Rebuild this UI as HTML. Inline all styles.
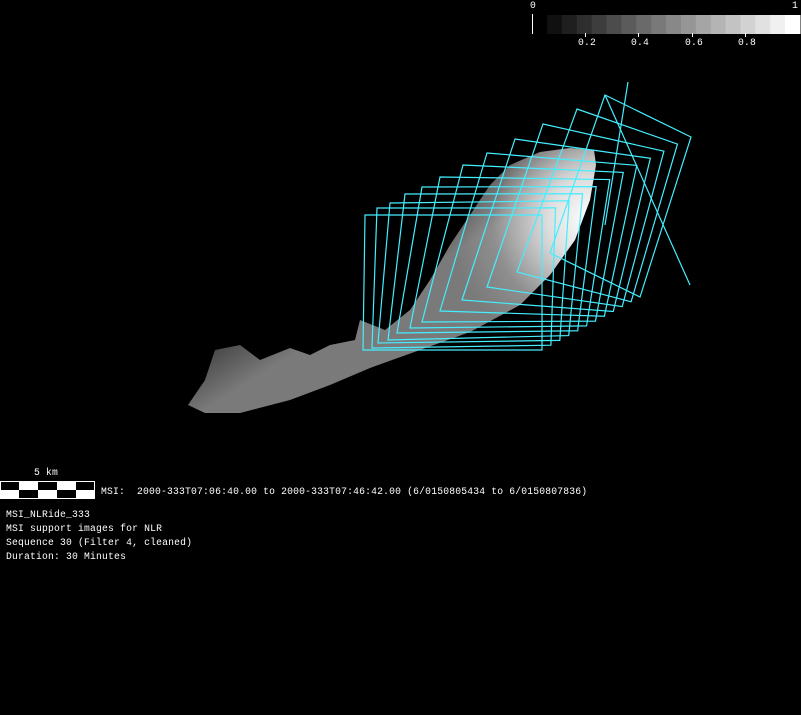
<!DOCTYPE html>
<html><head><meta charset="utf-8"><style>
html,body{margin:0;padding:0;background:#000;width:801px;height:715px;overflow:hidden}
.t{position:absolute;color:#fff;font-family:"Liberation Mono",monospace;font-size:9.7px;letter-spacing:0.19px;line-height:14px;white-space:pre}
</style></head><body>
<svg width="801" height="715" style="position:absolute;left:0;top:0">
<defs>
<linearGradient id="b" x1="395" y1="290" x2="335" y2="195" gradientUnits="userSpaceOnUse">
<stop offset="0" stop-color="#7a7a7a"/>
<stop offset="0.4" stop-color="#4a4a4a"/>
<stop offset="1" stop-color="#1e1e1e"/>
</linearGradient>
<radialGradient id="w" cx="590" cy="220" r="140" gradientUnits="userSpaceOnUse">
<stop offset="0" stop-color="#fff" stop-opacity="1"/>
<stop offset="0.3" stop-color="#fff" stop-opacity="0.75"/>
<stop offset="0.7" stop-color="#fff" stop-opacity="0.15"/>
<stop offset="1" stop-color="#fff" stop-opacity="0"/>
</radialGradient>
</defs>
<g id="ast">
<polygon fill="url(#b)" points="188,405 205,413 240,413 290,400 330,385 370,368 420,350 470,332 520,305 550,275 575,240 590,200 596,165 594,150 570,148 540,152 510,165 490,185 470,215 450,245 430,280 410,310 385,330 360,320 355,340 330,345 310,355 290,348 260,360 240,345 215,350 205,380"/>
<polygon fill="url(#w)" points="188,405 205,413 240,413 290,400 330,385 370,368 420,350 470,332 520,305 550,275 575,240 590,200 596,165 594,150 570,148 540,152 510,165 490,185 470,215 450,245 430,280 410,310 385,330 360,320 355,340 330,345 310,355 290,348 260,360 240,345 215,350 205,380"/>
</g>
<g fill="none" stroke="#4ef" stroke-width="1.2" id="fr"></g>
<line x1="628" y1="82" x2="605" y2="225" stroke="#4ef" stroke-width="1.2"/>
<line x1="605" y1="95" x2="690" y2="285" stroke="#4ef" stroke-width="1.2"/>
<g id="cb"></g>
<line x1="532.5" y1="14" x2="532.5" y2="34" stroke="#fff"/>
<g stroke="#fff"><line x1="585.5" y1="33" x2="585.5" y2="37"/><line x1="638.5" y1="33" x2="638.5" y2="37"/><line x1="692.5" y1="33" x2="692.5" y2="37"/><line x1="745.5" y1="33" x2="745.5" y2="37"/></g>
<rect x="0.5" y="481.5" width="94" height="17" fill="#000" stroke="#fff"/>
<g fill="#fff"><rect x="19" y="482" width="19" height="8"/><rect x="57" y="482" width="19" height="8"/>
<rect x="0" y="490" width="19" height="8"/><rect x="38" y="490" width="19" height="8"/><rect x="76" y="490" width="19" height="8"/></g>
</svg>
<div class="t" style="left:530px;top:-1px">0</div>
<div class="t" style="left:792px;top:-1px">1</div>
<div class="t" style="left:578px;top:36px">0.2</div>
<div class="t" style="left:631px;top:36px">0.4</div>
<div class="t" style="left:685px;top:36px">0.6</div>
<div class="t" style="left:738px;top:36px">0.8</div>
<div class="t" style="left:34px;top:466px">5 km</div>
<div class="t" style="left:101px;top:485px">MSI:  2000-333T07:06:40.00 to 2000-333T07:46:42.00 (6/0150805434 to 6/0150807836)</div>
<div class="t" style="left:6px;top:508px">MSI_NLRide_333
MSI support images for NLR
Sequence 30 (Filter 4, cleaned)
Duration: 30 Minutes</div>
<script>
var TL=[[365,215],[377,208],[390,203],[405,194],[422,187],[440,177],[463,165],[487,153],[515,139],[543,124],[577,109],[605,95]];
var BL=[[363,350],[372,348],[378,343],[388,340],[397,333],[410,328],[422,322],[440,311],[462,300],[487,287],[517,272],[550,253]];
var g=document.getElementById('fr'),s='';
for(var i=0;i<12;i++){var t=i/11;
var tr=[542+149*t,215-78*t],br=[542+98*t,350-53*t];
s+='<polygon points="'+TL[i]+' '+tr+' '+br+' '+BL[i]+'"/>';}
g.innerHTML=s;
var c='';for(var k=0;k<17;k++){var v=Math.round(16+k*239/16);
c+='<rect x="'+(547+k*253/17)+'" y="15" width="'+(253/17+0.5)+'" height="19" fill="rgb('+v+','+v+','+v+')"/>';}
document.getElementById('cb').innerHTML=c;
</script>
</body></html>
